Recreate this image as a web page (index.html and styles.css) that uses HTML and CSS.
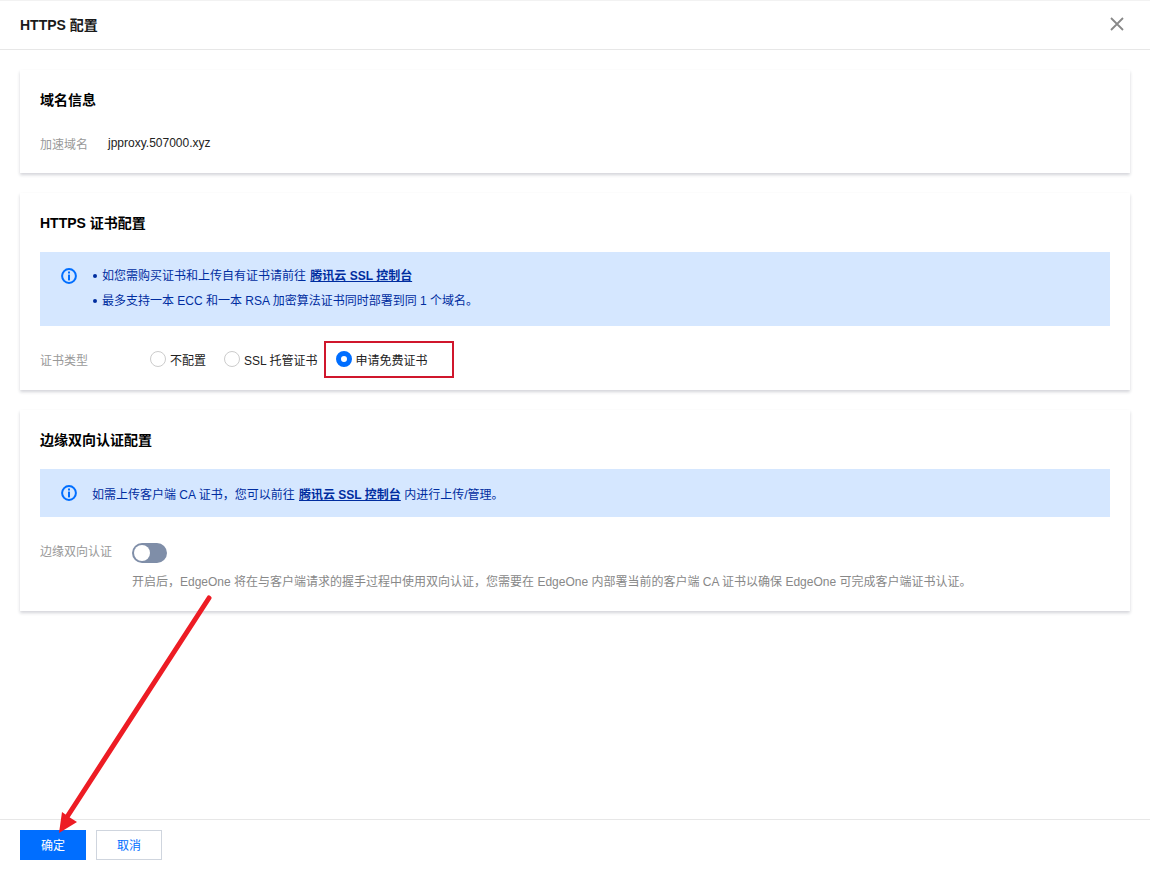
FILE: index.html
```html
<!DOCTYPE html>
<html lang="zh-CN">
<head>
<meta charset="utf-8">
<title>HTTPS 配置</title>
<link rel="stylesheet" href="styles.css">
</head>
<body>
<div class="drawer">
  <header class="drawer-head">
    <h1 class="drawer-title">HTTPS 配置</h1>
    <svg class="close" width="14" height="14" viewBox="0 0 14 14"><path d="M1 1l12 12M13 1L1 13" stroke="#888" stroke-width="1.8" fill="none"/></svg>
  </header>
  <main class="drawer-body">
    <section class="card card-domain">
      <h2 class="card-title">域名信息</h2>
      <div class="row">
        <span class="label label-short">加速域名</span>
        <span class="value">jpproxy.507000.xyz</span>
      </div>
    </section>
    <section class="card card-cert">
      <h2 class="card-title">HTTPS 证书配置</h2>
      <div class="notice notice-tall">
        <svg class="info" width="16" height="16" viewBox="0 0 16 16"><circle cx="8" cy="8" r="6.9" fill="none" stroke="#006eff" stroke-width="2"/><rect x="7" y="3.5" width="2" height="2" fill="#006eff"/><rect x="7" y="6.6" width="2" height="5.8" fill="#006eff"/></svg>
        <ul class="notice-list">
          <li>如您需购买证书和上传自有证书请前往 <a class="link" href="#">腾讯云 SSL 控制台</a></li>
          <li>最多支持一本 ECC 和一本 RSA 加密算法证书同时部署到同 1 个域名。</li>
        </ul>
      </div>
      <div class="row-radio">
        <span class="label label-radio">证书类型</span>
        <span class="radio"><i class="dot"></i>不配置</span>
        <span class="radio"><i class="dot"></i>SSL 托管证书</span>
        <span class="radio"><i class="dot dot-on"></i>申请免费证书<b class="redbox"></b></span>
      </div>
    </section>
    <section class="card card-mtls">
      <h2 class="card-title">边缘双向认证配置</h2>
      <div class="notice notice-short">
        <svg class="info" width="16" height="16" viewBox="0 0 16 16"><circle cx="8" cy="8" r="6.9" fill="none" stroke="#006eff" stroke-width="2"/><rect x="7" y="3.5" width="2" height="2" fill="#006eff"/><rect x="7" y="6.6" width="2" height="5.8" fill="#006eff"/></svg>
        <p class="notice-text">如需上传客户端 CA 证书，您可以前往 <a class="link" href="#">腾讯云 SSL 控制台</a> 内进行上传/管理。</p>
      </div>
      <div class="row-switch">
        <span class="label label-switch">边缘双向认证</span>
        <div class="switch-col">
          <span class="switch"><i class="knob"></i></span>
          <p class="help">开启后，EdgeOne 将在与客户端请求的握手过程中使用双向认证，您需要在 EdgeOne 内部署当前的客户端 CA 证书以确保 EdgeOne 可完成客户端证书认证。</p>
        </div>
      </div>
    </section>
  </main>
  <footer class="drawer-foot">
    <button class="btn btn-primary">确定</button>
    <button class="btn btn-weak">取消</button>
  </footer>
  <svg class="arrow" width="1150" height="869" viewBox="0 0 1150 869"><path d="M209 598L67 817" stroke="#ed1c24" stroke-width="5" stroke-linecap="round" fill="none"/><path d="M59 833L62 812L69 817L77 822Z" fill="#ed1c24"/></svg>
</div>
</body>
</html>
```
FILE: styles.css
```css
* { box-sizing: border-box; }
html, body { margin: 0; height: 100%; }
body {
  font-family: "Liberation Sans", "Noto Sans CJK SC", sans-serif;
  font-size: 12px;
  color: #000;
  background: #fff;
  overflow: hidden;
}
.drawer {
  position: relative;
  width: 1150px;
  height: 869px;
  display: flex;
  flex-direction: column;
  border-top: 1px solid #f2f2f2;
}
.drawer-head {
  height: 49px;
  flex: none;
  display: flex;
  align-items: center;
  justify-content: space-between;
  padding: 0 26px 2px 20px;
  border-bottom: 1px solid #e7e7e7;
}
.drawer-title { margin: 0; font-size: 14px; font-weight: 700; color: #1a1a1a; }
.drawer-body {
  flex: 1;
  padding: 20px 20px 0;
  display: flex;
  flex-direction: column;
  gap: 20px;
}
.card {
  background: #fff;
  padding: 20px 20px 0;
  box-shadow: 0 2px 3px rgba(54, 58, 80, 0.22);
}
.card-domain { height: 103px; }
.card-cert { height: 197px; }
.card-mtls { height: 201px; }
.card-title {
  margin: 0;
  height: 20px;
  line-height: 20px;
  font-size: 14px;
  font-weight: 700;
  color: #000;
}
.row { margin-top: 23px; display: flex; align-items: center; height: 20px; }
.label { color: #999; }
.label-short { width: 68px; }
.value { color: #222; }
.notice {
  margin-top: 19px;
  background: #d5e7ff;
  display: flex;
  padding-left: 21px;
  color: #002da0;
}
.notice-tall { height: 74px; padding-top: 16px; }
.notice-short { height: 48px; align-items: center; }
.info { flex: none; }
.notice-list { margin: -1px 0 0 15px; padding: 0; list-style: none; }
.notice-list li { height: 25px; line-height: 18px; position: relative; padding-left: 10px; }
.notice-list li::before {
  content: "";
  position: absolute;
  left: 1px;
  top: 7px;
  width: 4px;
  height: 4px;
  border-radius: 50%;
  background: #002da0;
}
.notice-text { margin: 0 0 0 15px; }
.link { margin-left: 1px; color: #002da0; font-weight: 700; text-decoration: underline; }
.row-radio { display: flex; align-items: center; margin-top: 13px; height: 40px; }
.label-radio { width: 110px; }
.radio { position: relative; display: flex; align-items: center; margin-right: 18px; color: #222; }
.dot {
  width: 16px;
  height: 16px;
  margin-right: 4px;
  border: 1px solid #ccc;
  border-radius: 50%;
  background: #fff;
}
.dot-on { border: 5px solid #006eff; }
.redbox {
  position: absolute;
  left: -12px;
  top: -10px;
  width: 130px;
  height: 37px;
  border: 2px solid #d0162c;
}
.row-switch { display: flex; margin-top: 26px; }
.label-switch { width: 92px; line-height: 18px; }
.switch-col { display: flex; flex-direction: column; }
.switch {
  display: block;
  width: 35px;
  height: 20px;
  border-radius: 10px;
  background: #7f8ea8;
  padding: 2px;
}
.knob { display: block; width: 16px; height: 16px; border-radius: 50%; background: #fff; }
.help { margin: 10px 0 0; line-height: 18px; color: #888; white-space: nowrap; }
.drawer-foot {
  flex: none;
  height: 50px;
  border-top: 1px solid #e7e7e7;
  padding: 10px 20px 0;
  display: flex;
  gap: 10px;
  align-items: flex-start;
}
.btn {
  width: 66px;
  height: 30px;
  padding: 0 0 2px;
  border: 1px solid #cfd5de;
  font: inherit;
  background: #fff;
}
.btn-primary { background: #006eff; border-color: #006eff; color: #fff; }
.btn-weak { color: #006eff; }
.arrow { position: absolute; left: 0; top: -1px; pointer-events: none; }
```
